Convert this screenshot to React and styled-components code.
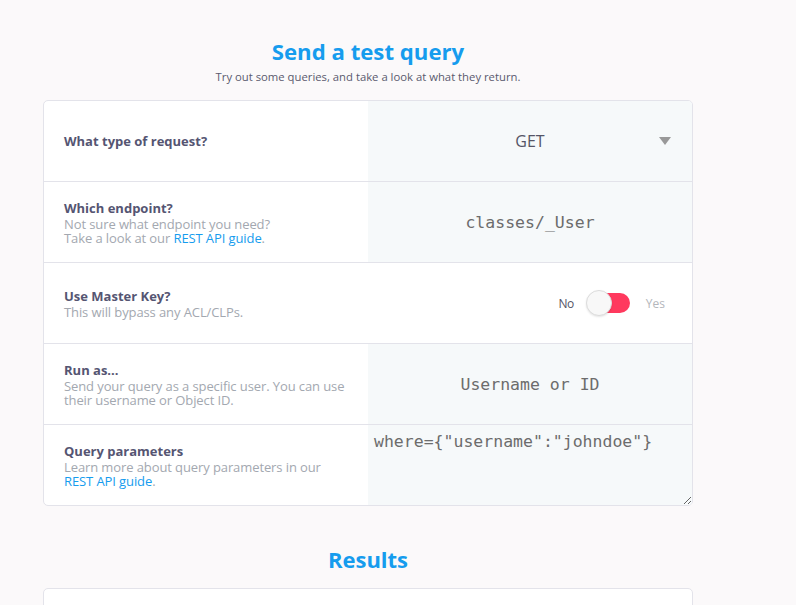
import React from "react";
import styled, { createGlobalStyle } from "styled-components";

const Global = createGlobalStyle`
  html, body { margin: 0; padding: 0; background: #fbf9fa; }
  body { font-family: "Open Sans", "Noto Sans", sans-serif; }
  * { box-sizing: border-box; }
`;

const Page = styled.div`
  width: 796px;
  padding: 36px 0 0 43px;
`;

const Column = styled.div`
  width: 650px;
  display: flex;
  flex-direction: column;
  align-items: center;
`;

const Title = styled.h1`
  margin: 0;
  font-size: 22.2px;
  line-height: 32px;
  font-weight: 700;
  color: #169cee;
`;

const Subtitle = styled.div`
  font-size: 11.3px;
  line-height: 17px;
  color: #5a5a6e;
`;

const Card = styled.div`
  margin-top: 15px;
  width: 650px;
  background: #fff;
  border: 1px solid #e3e3ea;
  border-radius: 5px;
  overflow: hidden;
`;

const Row = styled.div`
  display: grid;
  grid-template-columns: 324px 1fr;
  height: 81px;
  border-bottom: 1px solid #e3e3ea;
  &:last-child { border-bottom: none; height: 80px; }
`;

const Label = styled.div`
  display: flex;
  flex-direction: column;
  justify-content: center;
  padding: 0 20px;
`;

const LabelTitle = styled.div`
  font-size: 13px;
  font-weight: 700;
  line-height: 18px;
  color: #555572;
`;

const Desc = styled.div`
  font-size: 13px;
  line-height: 14px;
  color: #a3a8b0;
  white-space: nowrap;
  letter-spacing: -0.1px;
`;

const Link = styled.a`
  color: #169cee;
  text-decoration: none;
`;

const Cell = styled.div`
  position: relative;
  display: flex;
  align-items: center;
  justify-content: ${(p) => (p.$end ? "flex-end" : "center")};
  background: ${(p) => (p.$white ? "#fff" : "#f6f9fa")};
  padding: ${(p) => (p.$end ? "0 27px 0 0" : "0")};
`;

const SelectText = styled.div`
  font-size: 16px;
  color: #555566;
`;

const Caret = styled.div`
  position: absolute;
  right: 21px;
  top: 36px;
  width: 0;
  height: 0;
  border-left: 6px solid transparent;
  border-right: 6px solid transparent;
  border-top: 8px solid #999;
`;

const Mono = styled.div`
  font-family: "DejaVu Sans Mono", "Liberation Mono", monospace;
  font-size: 16.5px;
  color: #6c6c6c;
`;

const Toggle = styled.div`
  display: flex;
  align-items: center;
  font-size: 12px;
`;

const ToggleLabel = styled.span`
  color: ${(p) => (p.$on ? "#555566" : "#b4b7bc")};
  letter-spacing: ${(p) => (p.$on ? "-0.5px" : "0")};
`;

const Track = styled.div`
  position: relative;
  margin: 0 16px 0 12px;
  width: 44px;
  height: 26px;
  display: flex;
  align-items: center;
`;

const TrackFill = styled.div`
  margin-left: 8px;
  width: 36px;
  height: 20px;
  border-radius: 10px;
  background: #ff395e;
`;

const Knob = styled.div`
  position: absolute;
  left: 0;
  top: 0;
  width: 26px;
  height: 26px;
  border-radius: 50%;
  background: #f8f8f8;
  border: 1px solid #dcdcdc;
  box-shadow: 0 1px 2px rgba(0,0,0,0.1);
`;

const TextArea = styled.textarea`
  width: 100%;
  height: 100%;
  border: none;
  outline: none;
  background: #f6f9fa;
  padding: 6px 6px;
  margin: 0;
  font-family: "DejaVu Sans Mono", "Liberation Mono", monospace;
  font-size: 16.5px;
  line-height: 22px;
  color: #6c6c6c;
  resize: both;
`;

const ResultsTitle = styled.h2`
  margin: 38px 0 0;
  font-size: 22px;
  line-height: 30px;
  font-weight: 700;
  color: #169cee;
`;

const ResultsCard = styled.div`
  margin-top: 14px;
  width: 650px;
  height: 40px;
  background: #fff;
  border: 1px solid #e3e3ea;
  border-radius: 5px;
`;

export default function App() {
  return (
    <Page>
      <Global />
      <Column>
        <Title>Send a test query</Title>
        <Subtitle>Try out some queries, and take a look at what they return.</Subtitle>
        <Card>
          <Row>
            <Label>
              <LabelTitle>What type of request?</LabelTitle>
            </Label>
            <Cell>
              <SelectText>GET</SelectText>
              <Caret />
            </Cell>
          </Row>
          <Row>
            <Label>
              <LabelTitle>Which endpoint?</LabelTitle>
              <Desc>
                Not sure what endpoint you need?
                <br />
                Take a look at our <Link href="#">REST API guide</Link>.
              </Desc>
            </Label>
            <Cell>
              <Mono>classes/_User</Mono>
            </Cell>
          </Row>
          <Row>
            <Label>
              <LabelTitle>Use Master Key?</LabelTitle>
              <Desc>This will bypass any ACL/CLPs.</Desc>
            </Label>
            <Cell $white $end>
              <Toggle>
                <ToggleLabel $on>No</ToggleLabel>
                <Track>
                  <TrackFill />
                  <Knob />
                </Track>
                <ToggleLabel>Yes</ToggleLabel>
              </Toggle>
            </Cell>
          </Row>
          <Row>
            <Label>
              <LabelTitle>Run as...</LabelTitle>
              <Desc>
                Send your query as a specific user. You can use
                <br />
                their username or Object ID.
              </Desc>
            </Label>
            <Cell>
              <Mono>Username or ID</Mono>
            </Cell>
          </Row>
          <Row>
            <Label>
              <LabelTitle>Query parameters</LabelTitle>
              <Desc>
                Learn more about query parameters in our
                <br />
                <Link href="#">REST API guide</Link>.
              </Desc>
            </Label>
            <Cell>
              <TextArea defaultValue={'where={"username":"johndoe"}'} />
            </Cell>
          </Row>
        </Card>
        <ResultsTitle>Results</ResultsTitle>
        <ResultsCard />
      </Column>
    </Page>
  );
}
